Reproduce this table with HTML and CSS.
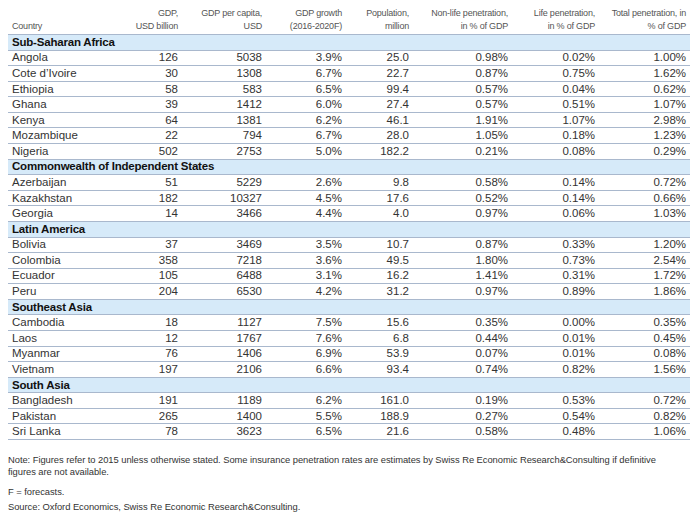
FILE: index.html
```html
<!DOCTYPE html>
<html>
<head>
<meta charset="utf-8">
<link rel="stylesheet" href="styles.css">
</head>
<body>
<table class="data">
  <colgroup>
    <col class="c-country"><col class="c-gdp"><col class="c-gdppc"><col class="c-growth"><col class="c-pop"><col class="c-nonlife"><col class="c-life"><col class="c-total">
  </colgroup>
  <thead>
    <tr class="head">
      <th class="left">Country</th>
      <th>GDP,<br>USD billion</th>
      <th>GDP per capita,<br>USD</th>
      <th>GDP growth<br>(2016-2020F)</th>
      <th>Population,<br>million</th>
      <th>Non-life penetration,<br>in % of GDP</th>
      <th>Life penetration,<br>in % of GDP</th>
      <th>Total penetration, in<br>% of GDP</th>
    </tr>
  </thead>
  <tbody>
    <tr class="region"><td colspan="8">Sub-Saharan Africa</td></tr>
    <tr><td>Angola</td><td>126</td><td>5038</td><td>3.9%</td><td>25.0</td><td>0.98%</td><td>0.02%</td><td>1.00%</td></tr>
    <tr><td>Cote d’Ivoire</td><td>30</td><td>1308</td><td>6.7%</td><td>22.7</td><td>0.87%</td><td>0.75%</td><td>1.62%</td></tr>
    <tr><td>Ethiopia</td><td>58</td><td>583</td><td>6.5%</td><td>99.4</td><td>0.57%</td><td>0.04%</td><td>0.62%</td></tr>
    <tr><td>Ghana</td><td>39</td><td>1412</td><td>6.0%</td><td>27.4</td><td>0.57%</td><td>0.51%</td><td>1.07%</td></tr>
    <tr><td>Kenya</td><td>64</td><td>1381</td><td>6.2%</td><td>46.1</td><td>1.91%</td><td>1.07%</td><td>2.98%</td></tr>
    <tr><td>Mozambique</td><td>22</td><td>794</td><td>6.7%</td><td>28.0</td><td>1.05%</td><td>0.18%</td><td>1.23%</td></tr>
    <tr><td>Nigeria</td><td>502</td><td>2753</td><td>5.0%</td><td>182.2</td><td>0.21%</td><td>0.08%</td><td>0.29%</td></tr>
    <tr class="region"><td colspan="8">Commonwealth of Independent States</td></tr>
    <tr><td>Azerbaijan</td><td>51</td><td>5229</td><td>2.6%</td><td>9.8</td><td>0.58%</td><td>0.14%</td><td>0.72%</td></tr>
    <tr><td>Kazakhstan</td><td>182</td><td>10327</td><td>4.5%</td><td>17.6</td><td>0.52%</td><td>0.14%</td><td>0.66%</td></tr>
    <tr><td>Georgia</td><td>14</td><td>3466</td><td>4.4%</td><td>4.0</td><td>0.97%</td><td>0.06%</td><td>1.03%</td></tr>
    <tr class="region"><td colspan="8">Latin America</td></tr>
    <tr><td>Bolivia</td><td>37</td><td>3469</td><td>3.5%</td><td>10.7</td><td>0.87%</td><td>0.33%</td><td>1.20%</td></tr>
    <tr><td>Colombia</td><td>358</td><td>7218</td><td>3.6%</td><td>49.5</td><td>1.80%</td><td>0.73%</td><td>2.54%</td></tr>
    <tr><td>Ecuador</td><td>105</td><td>6488</td><td>3.1%</td><td>16.2</td><td>1.41%</td><td>0.31%</td><td>1.72%</td></tr>
    <tr><td>Peru</td><td>204</td><td>6530</td><td>4.2%</td><td>31.2</td><td>0.97%</td><td>0.89%</td><td>1.86%</td></tr>
    <tr class="region"><td colspan="8">Southeast Asia</td></tr>
    <tr><td>Cambodia</td><td>18</td><td>1127</td><td>7.5%</td><td>15.6</td><td>0.35%</td><td>0.00%</td><td>0.35%</td></tr>
    <tr><td>Laos</td><td>12</td><td>1767</td><td>7.6%</td><td>6.8</td><td>0.44%</td><td>0.01%</td><td>0.45%</td></tr>
    <tr><td>Myanmar</td><td>76</td><td>1406</td><td>6.9%</td><td>53.9</td><td>0.07%</td><td>0.01%</td><td>0.08%</td></tr>
    <tr><td>Vietnam</td><td>197</td><td>2106</td><td>6.6%</td><td>93.4</td><td>0.74%</td><td>0.82%</td><td>1.56%</td></tr>
    <tr class="region"><td colspan="8">South Asia</td></tr>
    <tr><td>Bangladesh</td><td>191</td><td>1189</td><td>6.2%</td><td>161.0</td><td>0.19%</td><td>0.53%</td><td>0.72%</td></tr>
    <tr><td>Pakistan</td><td>265</td><td>1400</td><td>5.5%</td><td>188.9</td><td>0.27%</td><td>0.54%</td><td>0.82%</td></tr>
    <tr><td>Sri Lanka</td><td>78</td><td>3623</td><td>6.5%</td><td>21.6</td><td>0.58%</td><td>0.48%</td><td>1.06%</td></tr>
  </tbody>
</table>
<div class="notes">
  <p class="note">Note: Figures refer to 2015 unless otherwise stated. Some insurance penetration rates are estimates by Swiss Re Economic Research&amp;Consulting if definitive figures are not available.</p>
  <p class="forecast">F = forecasts.</p>
  <p class="source">Source: Oxford Economics, Swiss Re Economic Research&amp;Consulting.</p>
</div>
</body>
</html>
```

FILE: styles.css
```css
html, body {
  margin: 0;
  padding: 0;
  background: #ffffff;
}
body {
  padding: 0 8px;
  font-family: "Liberation Sans", Arial, sans-serif;
  color: #2e2e2e;
}
.data {
  width: 682px;
  border-collapse: collapse;
  table-layout: fixed;
}
.c-country { width: 102px; }
.c-gdp { width: 72px; }
.c-gdppc { width: 84px; }
.c-growth { width: 80px; }
.c-pop { width: 67px; }
.c-nonlife { width: 99px; }
.c-life { width: 87px; }
.c-total { width: 91px; }

.head th {
  height: 33px;
  padding: 0 4px 1px 0;
  vertical-align: bottom;
  text-align: right;
  font-weight: normal;
  font-size: 9px;
  line-height: 13px;
  color: #555;
  letter-spacing: -0.2px;
  border-bottom: 1px solid #a9b8cd;
  white-space: nowrap;
}
.head th.left {
  text-align: left;
  padding-left: 4px;
}
tbody tr {
  height: 15.58px;
}
tbody td {
  padding: 0 4px 0 0;
  text-align: right;
  font-size: 11.5px;
  line-height: 13px;
  color: #333;
  border-bottom: 1px solid #a9b8cd;
  white-space: nowrap;
}
tbody td:first-child {
  text-align: left;
  padding-left: 4px;
}
.region td {
  background: #d6eaf9;
  font-weight: bold;
  color: #111;
  text-align: left;
  letter-spacing: -0.2px;
}
.notes {
  padding-top: 14px;
  font-size: 9.4px;
  line-height: 12px;
  color: #333;
  letter-spacing: -0.05px;
}
.notes p {
  margin: 0;
}
.note { width: 668px; }
.forecast { margin-top: 8px !important; }
.source { margin-top: 3px !important; }
```
